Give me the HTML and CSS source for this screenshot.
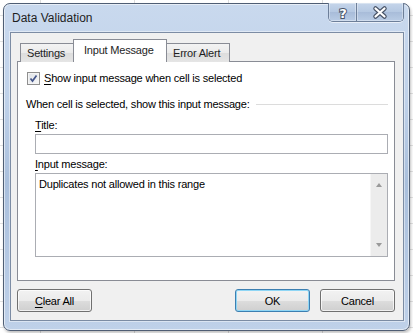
FILE: index.html
```html
<!DOCTYPE html>
<html lang="en">
<head>
    <meta charset="UTF-8">
    <title>Data Validation</title>
    <link rel="stylesheet" href="styles.css">
</head>
<body>
    <div class="window">
        <div class="titlebar">
            <span class="title">Data Validation</span>
            <div class="caption-buttons">
                <div class="cap-btn help">
                    <svg width="28" height="19" viewBox="0 0 28 19">
                        <text x="14" y="15" text-anchor="middle" class="cap-glyph">?</text>
                    </svg>
                </div>
                <div class="cap-btn close">
                    <svg width="46" height="19" viewBox="0 0 46 19">
                        <path d="M18.5 5.5 L27.5 13.5 M27.5 5.5 L18.5 13.5" class="x-outline"/>
                        <path d="M18.5 5.5 L27.5 13.5 M27.5 5.5 L18.5 13.5" class="x-fill"/>
                    </svg>
                </div>
            </div>
        </div>

        <div class="client">
            <div class="tabs">
                <div class="tab">Settings</div>
                <div class="tab active">Input Message</div>
                <div class="tab">Error Alert</div>
            </div>

            <div class="panel">
                <div class="check-row">
                    <span class="checkbox">
                        <svg width="13" height="13" viewBox="0 0 13 13">
                            <path d="M3.5 6.5 L5.5 9 L9.5 3.5" class="tick"/>
                        </svg>
                    </span>
                    <span><u>S</u>how input message when cell is selected</span>
                </div>

                <div class="group-header">When cell is selected, show this input message:</div>

                <div class="field">
                    <div class="field-label"><u>T</u>itle:</div>
                    <div class="textbox"></div>
                </div>

                <div class="field">
                    <div class="field-label"><u>I</u>nput message:</div>
                    <div class="textarea">
                        <div class="textarea-text">Duplicates not allowed in this range</div>
                        <div class="scrollbar">
                            <span class="arrow up"></span>
                            <span class="arrow down"></span>
                        </div>
                    </div>
                </div>
            </div>

            <div class="buttons">
                <button class="btn"><u>C</u>lear All</button>
                <div class="spacer"></div>
                <button class="btn default">OK</button>
                <button class="btn">Cancel</button>
            </div>
        </div>
    </div>
</body>
</html>
```

FILE: styles.css
```css
* {
    margin: 0;
    padding: 0;
    box-sizing: border-box;
}

body {
    width: 413px;
    height: 333px;
    overflow: hidden;
    padding: 3px 0 0 3px;
    font-family: 'Liberation Sans', Arial, sans-serif;
    font-size: 11px;
    letter-spacing: -0.2px;
    line-height: 15px;
    color: #000;
    background-color: #fff;
    background-image:
        linear-gradient(to right, #dcdcdc 1px, transparent 1px),
        linear-gradient(to bottom, #e2e2e2 1px, transparent 1px);
    background-size: 94px 100%, 100% 26px;
    background-position: 40px 0, 0 15px;
}

u {
    text-decoration: underline;
    text-underline-offset: 2px;
}

.window {
    width: 407px;
    height: 328px;
    border: 1px solid #4f5e74;
    border-radius: 7px;
    background: linear-gradient(to bottom, #c9d9ee 0%, #bfd1e9 30%, #a9bfdc 55%, #b3c7e2 75%, #bfd1e9 100%);
    box-shadow: inset 0 0 0 1px rgba(255, 255, 255, 0.55), 1px 2px 3px rgba(0, 0, 0, 0.25);
    display: flex;
    flex-direction: column;
}

.titlebar {
    height: 28px;
    display: flex;
    justify-content: space-between;
    align-items: flex-start;
}

.title {
    padding: 7px 0 0 8px;
    font-size: 12px;
    letter-spacing: 0;
    color: #1e1e1e;
}

.caption-buttons {
    display: flex;
    margin: -1px 5px 0 0;
    height: 19px;
    border: 1px solid #6d7f99;
    border-top: none;
    border-radius: 0 0 5px 5px;
    overflow: hidden;
    box-shadow: 0 1px 0 rgba(255, 255, 255, 0.6);
}

.cap-btn {
    height: 18px;
    background: linear-gradient(to bottom, #c5d5ea, #b5c8e2 50%, #a8bcd9 51%, #b9cce5);
    box-shadow: inset 0 0 0 1px rgba(255, 255, 255, 0.35);
}

.cap-btn.help {
    width: 28px;
    border-right: 1px solid #6d7f99;
}

.cap-btn.close {
    width: 46px;
}

.cap-btn svg {
    display: block;
}

.cap-glyph {
    font-family: 'DejaVu Sans', sans-serif;
    font-weight: bold;
    font-size: 13px;
    fill: #fff;
    stroke: #4a5569;
    stroke-width: 2;
    paint-order: stroke;
}

.x-outline {
    stroke: #4a5569;
    stroke-width: 4.5;
    stroke-linecap: round;
    fill: none;
}

.x-fill {
    stroke: #fff;
    stroke-width: 2.2;
    stroke-linecap: round;
    fill: none;
}

.client {
    margin: 0 5px 0 6px;
    height: 289px;
    background-color: #f0f0f0;
    border: 1px solid #7c8ca4;
    box-shadow: 0 0 0 1px rgba(255, 255, 255, 0.45);
    padding: 6px 8px 0 6px;
}

.tabs {
    display: flex;
    align-items: flex-end;
    height: 23px;
    padding-left: 3px;
    margin-bottom: -1px;
    position: relative;
    z-index: 1;
}

.tab {
    height: 19px;
    padding: 0 6px;
    line-height: 19px;
    white-space: nowrap;
    border: 1px solid #898c95;
    border-bottom: none;
    margin-right: -1px;
    background: linear-gradient(to bottom, #f3f3f3, #ebebeb 50%, #dddddd 51%, #e5e5e5);
    color: #1e1e1e;
}

.tab:first-child {
    width: 54px;
}

.tab.active {
    height: 23px;
    width: 94px;
    padding: 0 0 0 10px;
    line-height: 21px;
    background: #fff;
    position: relative;
    z-index: 2;
}

.tab:last-child {
    width: 64px;
}

.panel {
    height: 220px;
    border: 1px solid #898c95;
    background: #fff;
    padding: 10px 6px 0 8px;
}

.check-row {
    display: flex;
    align-items: center;
    gap: 4px;
    margin-left: 1px;
    height: 13px;
}

.checkbox {
    width: 13px;
    height: 13px;
    border: 1px solid #8f8f8f;
    background: linear-gradient(135deg, #dfe3e8, #f7f7f7);
    box-shadow: inset 0 0 0 1px #f4f4f4;
    display: block;
}

.checkbox svg {
    display: block;
    margin: -1px 0 0 -1px;
}

.tick {
    fill: none;
    stroke: #44558a;
    stroke-width: 1.7;
}

.group-header {
    margin-top: 12px;
    display: flex;
    align-items: center;
    gap: 6px;
}

.group-header::after {
    content: '';
    flex: 1;
    border-top: 1px solid #dcdcdc;
}

.field {
    margin-left: 9px;
}

.field-label {
    margin-top: 6px;
}

.field + .field .field-label {
    margin-top: 3px;
}

.textbox {
    margin-top: 1px;
    height: 20px;
    border: 1px solid #abadb3;
    background: #fff;
}

.textarea {
    margin-top: 1px;
    height: 84px;
    border: 1px solid #abadb3;
    background: #fff;
    display: flex;
}

.textarea-text {
    flex: 1;
    padding: 3px 3px;
}

.scrollbar {
    width: 17px;
    background: #ececec;
    border-left: 1px solid #f6f6f6;
    display: flex;
    flex-direction: column;
    justify-content: space-between;
    align-items: center;
    padding: 9px 0 9px;
}

.arrow {
    width: 0;
    height: 0;
    border-left: 3.5px solid transparent;
    border-right: 3.5px solid transparent;
}

.arrow.up {
    border-bottom: 4px solid #9a9a9a;
}

.arrow.down {
    border-top: 4px solid #9a9a9a;
}

.buttons {
    display: flex;
    margin-top: 8px;
    gap: 10px;
}

.spacer {
    flex: 1;
}

.btn {
    width: 75px;
    height: 23px;
    font-family: inherit;
    font-size: 11px;
    letter-spacing: -0.2px;
    color: #000;
    border: 1px solid #707070;
    border-radius: 3px;
    background: linear-gradient(to bottom, #f2f2f2, #ebebeb 50%, #dddddd 51%, #cfcfcf);
    box-shadow: inset 0 0 0 1px rgba(255, 255, 255, 0.7);
}

.btn.default {
    border-color: #3c7fb1;
    box-shadow: inset 0 0 0 1px #8fd6f5;
}
```
